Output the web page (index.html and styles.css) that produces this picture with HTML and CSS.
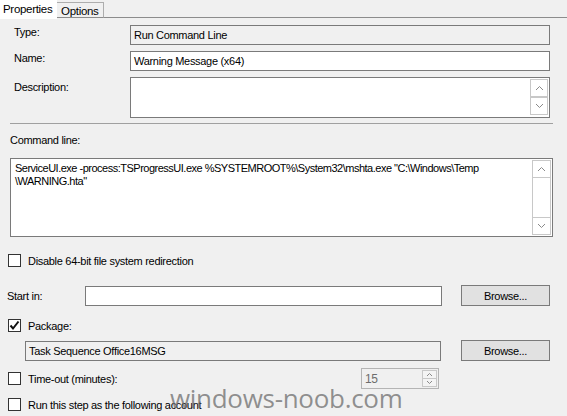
FILE: index.html
```html
<!DOCTYPE html>
<html>
<head>
<meta charset="utf-8">
<link rel="stylesheet" href="styles.css">
</head>
<body>
<div class="window">
  <div class="tabs">
    <div class="tab active">Properties</div>
    <div class="tab">Options</div>
    <div class="tab-fill"></div>
  </div>
  <div class="panel">
    <div class="frow r-type">
      <span class="label">Type:</span>
      <div class="box readonly">Run Command Line</div>
    </div>
    <div class="frow r-name">
      <span class="label">Name:</span>
      <div class="box">Warning Message (x64)</div>
    </div>
    <div class="frow r-desc">
      <span class="label">Description:</span>
      <div class="box multi">
        <div class="scroll">
          <div class="sbtn">
            <svg width="9" height="6" viewBox="0 0 9 6"><path d="M1 5 L4.5 1.5 L8 5" fill="none" stroke="#8a8a8a" stroke-width="1"/></svg>
          </div>
          <div class="sbtn">
            <svg width="9" height="6" viewBox="0 0 9 6"><path d="M1 1 L4.5 4.5 L8 1" fill="none" stroke="#8a8a8a" stroke-width="1"/></svg>
          </div>
        </div>
      </div>
    </div>
    <div class="sep"></div>
    <div class="cmd-label">Command line:</div>
    <div class="cmd-box">
      <div class="cmd-text">ServiceUI.exe -process:TSProgressUI.exe %SYSTEMROOT%\System32\mshta.exe "C:\Windows\Temp<br>\WARNING.hta"</div>
      <div class="scroll tall">
        <div class="sbtn">
          <svg width="9" height="6" viewBox="0 0 9 6"><path d="M1 5 L4.5 1.5 L8 5" fill="none" stroke="#8a8a8a" stroke-width="1"/></svg>
        </div>
        <div class="track"></div>
        <div class="sbtn">
          <svg width="9" height="6" viewBox="0 0 9 6"><path d="M1 1 L4.5 4.5 L8 1" fill="none" stroke="#8a8a8a" stroke-width="1"/></svg>
        </div>
      </div>
    </div>
    <div class="check-row r-disable">
      <span class="cb"></span><span class="ctext">Disable 64-bit file system redirection</span>
    </div>
    <div class="start-row">
      <span class="start-label">Start in:</span>
      <div class="box start-box"></div>
      <div class="btn">Browse...</div>
    </div>
    <div class="check-row r-package">
      <span class="cb">
        <svg width="11" height="11" viewBox="0 0 11 11"><path d="M1.5 5.5 L4 8.5 L9.5 1.5" fill="none" stroke="#111" stroke-width="2"/></svg>
      </span><span class="ctext">Package:</span>
    </div>
    <div class="pkg-row">
      <div class="box readonly pkg-box">Task Sequence Office16MSG</div>
      <div class="btn">Browse...</div>
    </div>
    <div class="timeout-row">
      <div class="check-row inline">
        <span class="cb"></span><span class="ctext">Time-out (minutes):</span>
      </div>
      <div class="spin">
        <span class="spin-val">15</span>
        <div class="spin-btns">
          <div class="spbtn"><svg width="7" height="5" viewBox="0 0 7 5"><path d="M1 4 L3.5 1.5 L6 4" fill="none" stroke="#8a8a8a" stroke-width="1"/></svg></div>
          <div class="spbtn"><svg width="7" height="5" viewBox="0 0 7 5"><path d="M1 1 L3.5 3.5 L6 1" fill="none" stroke="#8a8a8a" stroke-width="1"/></svg></div>
        </div>
      </div>
    </div>
    <div class="check-row r-run">
      <span class="cb"></span><span class="ctext">Run this step as the following account</span>
    </div>
  </div>
  <div class="watermark">windows-noob.com</div>
</div>
</body>
</html>
```

FILE: styles.css
```css
* { box-sizing: border-box; }
html, body {
  margin: 0;
  padding: 0;
  background: #f0f0f0;
}
body {
  font-family: "Liberation Sans", Arial, sans-serif;
  font-size: 11px;
  letter-spacing: -0.3px;
  color: #000;
}
.window {
  position: relative;
  width: 567px;
  height: 416px;
  overflow: hidden;
  background: #f0f0f0;
}
.tabs {
  display: flex;
  height: 18px;
  align-items: flex-end;
}
.tab {
  height: 16px;
  line-height: 14px;
  padding: 0 4px;
  border: 1px solid #adadad;
  border-left: none;
  background: #f0f0f0;
  font-size: 11.5px;
}
.tab.active {
  height: 19px;
  width: 57px;
  align-self: flex-start;
  background: #fff;
  border: none;
  padding: 2px 3px 0;
  margin-bottom: -1px;
  position: relative;
  z-index: 1;
}
.tab-fill {
  flex: 1;
  height: 1px;
  background: #8c8c8c;
}
.tabs .tab:nth-child(2) {
  width: 47px;
  border-bottom: 1px solid #8c8c8c;
  padding-top: 1px;
}
.panel {
  display: flex;
  flex-direction: column;
}
.frow {
  display: flex;
  align-items: flex-start;
}
.label {
  width: 116px;
  margin-left: 14px;
  padding-top: 1px;
}
.box {
  border: 1px solid #7a7a7a;
  background: #fff;
  padding: 2px 3px;
  line-height: 14px;
  white-space: nowrap;
}
.box.readonly { background: #f0f0f0; }
.r-type { margin-top: 7px; }
.r-type .box, .r-name .box { width: 420px; height: 20px; }
.r-name { margin-top: 6px; }
.r-desc { margin-top: 6px; }
.r-desc .label { padding-top: 4px; }
.box.multi {
  width: 420px;
  height: 41px;
  padding: 1px;
  display: flex;
  justify-content: flex-end;
}
.scroll {
  width: 18px;
  display: flex;
  flex-direction: column;
}
.sbtn {
  height: 18px;
  border: 1px solid #c8c8c8;
  background: #fff;
  display: flex;
  align-items: center;
  justify-content: center;
}
.sep {
  margin: 5px 14px 0 10px;
  height: 1px;
  background: #a0a0a0;
}
.cmd-label {
  margin: 9px 0 0 10px;
  line-height: 14px;
}
.cmd-box {
  margin: 11px 0 0 10px;
  width: 543px;
  height: 79px;
  border: 1px solid #7a7a7a;
  background: #fff;
  display: flex;
  padding: 1px;
}
.cmd-text {
  flex: 1;
  padding: 2px 3px;
  line-height: 13px;
  font-size: 11px;
  letter-spacing: -0.5px;
  white-space: nowrap;
}
.scroll.tall {
  width: 19px;
  border: 1px solid #c8c8c8;
}
.scroll.tall .sbtn { border: none; height: 17px; }
.scroll.tall .sbtn:first-child { border-bottom: 1px solid #c8c8c8; }
.scroll.tall .sbtn:last-child { border-top: 1px solid #c8c8c8; }
.track { flex: 1; background: #fff; }
.check-row {
  display: flex;
  align-items: center;
  margin-left: 8px;
  height: 13px;
}
.check-row.inline { margin-left: 0; }
.cb {
  width: 13px;
  height: 13px;
  border: 1px solid #333;
  background: #fff;
  display: flex;
  align-items: center;
  justify-content: center;
  flex: none;
}
.ctext { margin-left: 7px; }
.r-disable { margin-top: 17px; }
.start-row {
  display: flex;
  align-items: center;
  margin-top: 18px;
  height: 21px;
}
.start-label { width: 78px; margin-left: 7px; }
.start-box { width: 357px; height: 20px; }
.btn {
  margin-left: 19px;
  width: 89px;
  height: 21px;
  border: 1px solid #7a7a7a;
  background: #e1e1e1;
  display: flex;
  align-items: center;
  justify-content: center;
}
.r-package { margin-top: 13px; }
.pkg-row {
  display: flex;
  align-items: center;
  margin-top: 8px;
  margin-left: 25px;
  height: 21px;
}
.pkg-box { width: 416px; height: 20px; }
.pkg-row .btn { margin-left: 20px; }
.timeout-row {
  display: flex;
  align-items: center;
  margin-top: 7px;
  margin-left: 8px;
  height: 21px;
}
.timeout-row .check-row { width: 353px; }
.spin {
  width: 78px;
  height: 21px;
  border: 1px solid #b4b4b4;
  background: #f0f0f0;
  display: flex;
  justify-content: space-between;
  padding: 1px;
}
.spin-val {
  color: #6d6d6d;
  padding: 2px 0 0 2px;
  line-height: 14px;
  font-size: 12px;
}
.spin-btns {
  width: 15px;
  display: flex;
  flex-direction: column;
}
.spbtn {
  flex: 1;
  border: 1px solid #c8c8c8;
  background: #f4f4f4;
  display: flex;
  align-items: center;
  justify-content: center;
}
.spbtn + .spbtn { border-top: none; }
.r-run { margin-top: 9px; }
.watermark {
  position: absolute;
  left: 170px;
  top: 381px;
  font-family: "Open Sans", sans-serif;
  font-size: 26px;
  letter-spacing: -0.3px;
  line-height: 34px;
  color: rgba(110, 110, 110, 0.75);
  white-space: nowrap;
}
```
